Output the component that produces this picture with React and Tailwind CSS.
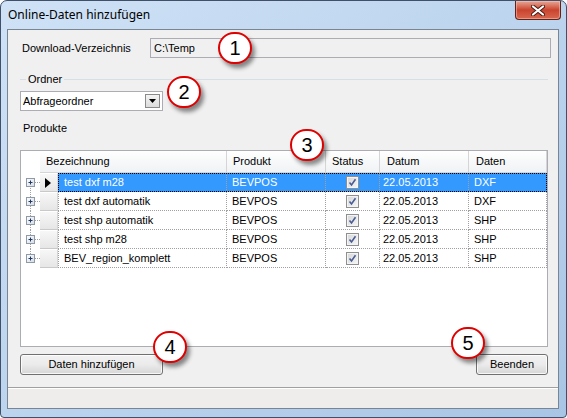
import clsx from 'clsx'

const rows = [
  ['test dxf m28', 'BEVPOS', '22.05.2013', 'DXF'],
  ['test dxf automatik', 'BEVPOS', '22.05.2013', 'DXF'],
  ['test shp automatik', 'BEVPOS', '22.05.2013', 'SHP'],
  ['test shp m28', 'BEVPOS', '22.05.2013', 'SHP'],
  ['BEV_region_komplett', 'BEVPOS', '22.05.2013', 'SHP'],
]

const callouts = [
  ['1', 'left-[217px] top-[31px]'],
  ['2', 'left-[166px] top-[75px]'],
  ['3', 'left-[289px] top-[128px]'],
  ['4', 'left-[152px] top-[330px]'],
  ['5', 'left-[450px] top-[326px]'],
]

function Expander({ first, last }) {
  return (
    <svg width="19" height="19" viewBox="0 0 19 19" className="shrink-0">
      <line x1="9.5" y1={first ? 9 : 0} x2="9.5" y2={last ? 9 : 19} stroke="#a0a0a0" strokeDasharray="1 1" />
      <line x1="14" y1="9.5" x2="19" y2="9.5" stroke="#a0a0a0" strokeDasharray="1 1" />
      <defs>
        <linearGradient id="pb" x1="0" y1="0" x2="1" y2="1">
          <stop offset="0" stopColor="#ffffff" />
          <stop offset="1" stopColor="#d6dbe3" />
        </linearGradient>
      </defs>
      <rect x="5.5" y="5.5" width="8" height="8" fill="url(#pb)" stroke="#8f9aa8" />
      <line x1="7.5" y1="9.5" x2="11.5" y2="9.5" stroke="#1e3a63" />
      <line x1="9.5" y1="7.5" x2="9.5" y2="11.5" stroke="#1e3a63" />
    </svg>
  )
}

function Check() {
  return (
    <svg width="13" height="13" viewBox="0 0 13 13">
      <defs>
        <linearGradient id="cb" x1="0" y1="0" x2="1" y2="1">
          <stop offset="0" stopColor="#d9d9d9" />
          <stop offset="1" stopColor="#f4f4f4" />
        </linearGradient>
      </defs>
      <rect x="0.5" y="0.5" width="12" height="12" fill="#f4f4f4" stroke="#8f8f8f" />
      <rect x="2" y="2" width="9" height="9" fill="url(#cb)" />
      <path d="M3.5 6.5 L5.5 9 L9.5 3.2" fill="none" stroke="#4a5c94" strokeWidth="1.6" />
    </svg>
  )
}

function Row({ data, i }) {
  const sel = i === 0
  const cell = 'h-full flex items-center border-r border-b border-dotted border-[#a0a0a0] whitespace-nowrap'
  return (
    <div className="flex h-[19px]">
      <Expander first={i === 0} last={i === rows.length - 1} />
      <div className="w-[18px] h-full shrink-0 flex items-center pl-[5px] bg-gradient-to-b from-[#f7f7f7] to-[#e6e6e6] border-t border-t-white border-b border-b-[#c9c9c9] border-r border-r-[#d6d6d6]">
        {sel && (
          <svg width="6" height="10" viewBox="0 0 6 10">
            <path d="M0 0 L6 5 L0 10 Z" fill="#000" />
          </svg>
        )}
      </div>
      <div
        className={clsx(
          'flex h-full',
          sel && 'bg-[#3399ff] text-white outline-1 outline-dotted outline-black -outline-offset-1'
        )}
      >
        <div className={clsx(cell, 'w-[169px] pl-[5px] border-l')}>{data[0]}</div>
        <div className={clsx(cell, 'w-[99px] pl-[5px]')}>{data[1]}</div>
        <div className={clsx(cell, 'w-[54px] justify-center')}>
          <Check />
        </div>
        <div className={clsx(cell, 'w-[89px] pl-[3px]')}>{data[2]}</div>
        <div className={clsx(cell, 'w-[78px] pl-[5px]')}>{data[3]}</div>
      </div>
    </div>
  )
}

function Header() {
  const h = 'h-full flex items-center pl-[6px] border-r border-[#d5d5d5] bg-gradient-to-b from-white via-[#f7f8f9] to-[#f1f2f4] border-b border-b-[#d5d5d5]'
  return (
    <div className="flex h-[22px]">
      <div className="w-[19px] shrink-0" />
      <div className={clsx(h, 'w-[187px]')}>Bezeichnung</div>
      <div className={clsx(h, 'w-[99px]')}>Produkt</div>
      <div className={clsx(h, 'w-[54px]')}>Status</div>
      <div className={clsx(h, 'w-[89px] pl-[7px]')}>Datum</div>
      <div className={clsx(h, 'w-[78px] pl-[7px]')}>Daten</div>
    </div>
  )
}

function Button({ children, className }) {
  return (
    <div
      className={clsx(
        'h-[21px] flex items-center justify-center rounded-[3px] border border-[#707070] bg-gradient-to-b from-[#f2f2f2] via-[#ebebeb] to-[#d6d6d6] shadow-[inset_0_0_0_1px_rgba(255,255,255,0.8)]',
        className
      )}
    >
      {children}
    </div>
  )
}

export default function App() {
  return (
    <div className="relative w-[567px] h-[418px] flex flex-col rounded-t-[7px] rounded-b-[4px] border border-[#3f5068] bg-gradient-to-br from-[#cfe2f6] via-[#bcd4ee] to-[#a9c5e5] pl-[6px] pr-[7px] pb-[8px] text-[11px] text-black font-['Liberation_Sans',Arial,sans-serif] overflow-hidden">
      <div className="h-[28px] flex items-start justify-between shrink-0">
        <div className="pl-[1px] pt-[6px] text-[12px] leading-[16px] font-['Noto_Sans','Liberation_Sans',sans-serif] text-[#000]">
          Online-Daten hinzufügen
        </div>
        <div className="-mr-[2px] w-[46px] h-[19px] rounded-b-[4px] border border-t-0 border-[#5e2418] bg-gradient-to-b from-[#e6a595] via-[#c9432d] to-[#d9674f] flex items-center justify-center shadow-[inset_0_0_0_1px_rgba(255,200,190,0.5)]">
          <svg width="14" height="11" viewBox="0 0 14 11">
            <path d="M2 1.5 L12 9.5 M12 1.5 L2 9.5" stroke="#4a1a12" strokeWidth="4" strokeLinecap="round" />
            <path d="M2 1.5 L12 9.5 M12 1.5 L2 9.5" stroke="#ffffff" strokeWidth="2.2" strokeLinecap="round" />
          </svg>
        </div>
      </div>

      <div className="flex-1 flex flex-col border border-[#7a8594] bg-[#f0f0f0]">
        <div className="flex items-center mt-[8px] h-[20px]">
          <div className="w-[142px] pl-[14px]">Download-Verzeichnis</div>
          <div className="flex-1 mr-[7px] h-full flex items-center pl-[3px] border border-[#abadb3] bg-[#f0f0f0]">C:\Temp</div>
        </div>

        <div className="flex items-center mt-[14px] h-[14px] pl-[12px] pr-[10px]">
          <div className="w-[6px] border-t border-[#d5dfe5]" />
          <div className="px-[2px]">Ordner</div>
          <div className="flex-1 border-t border-[#d5dfe5]" />
        </div>

        <div className="mt-[5px] ml-[12px] w-[143px] h-[20px] flex items-center justify-between pl-[2px] pr-[2px] border border-[#abadb3] bg-white">
          <span>Abfrageordner</span>
          <div className="w-[15px] h-[14px] flex items-center justify-center border border-[#8a8a8a] bg-gradient-to-b from-[#f4f4f4] to-[#dcdcdc]">
            <svg width="7" height="4" viewBox="0 0 7 4">
              <path d="M0 0 L7 0 L3.5 4 Z" fill="#000" />
            </svg>
          </div>
        </div>

        <div className="mt-[11px] h-[13px] leading-[13px] pl-[15px]">Produkte</div>

        <div className="mt-[15px] ml-[12px] mr-[10px] h-[197px] border border-[#abadb3] bg-white">
          <Header />
          {rows.map((r, i) => (
            <Row key={i} data={r} i={i} />
          ))}
        </div>

        <div className="mt-[7px] flex justify-between pl-[12px] pr-[10px]">
          <Button className="w-[143px]">Daten hinzufügen</Button>
          <Button className="w-[72px]">Beenden</Button>
        </div>

        <div className="mt-[12px] flex-1 border-t border-[#a0a0a0] bg-[#efecec] shadow-[inset_0_1px_0_#ffffff]" />
      </div>

      {callouts.map(([n, pos]) => (
        <div
          key={n}
          className={clsx(
            'absolute w-[34px] h-[32px] rounded-full border-[2px] border-[#e00000] bg-white flex items-center justify-center text-[20px] leading-none shadow-[3px_4px_4px_rgba(0,0,0,0.45)]',
            pos
          )}
        >
          {n}
        </div>
      ))}
    </div>
  )
}
